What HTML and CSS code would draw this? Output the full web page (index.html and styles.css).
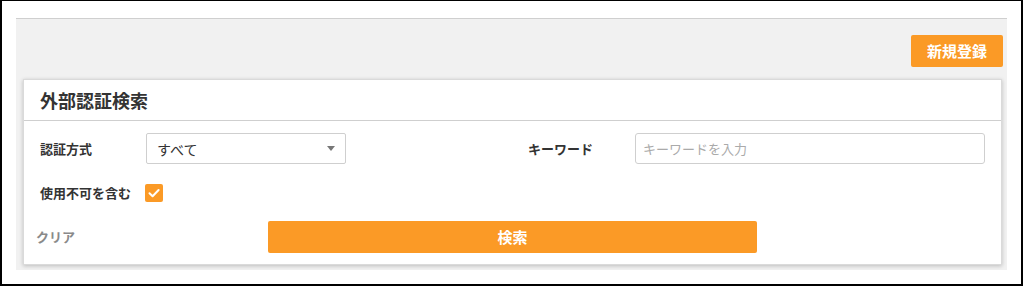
FILE: index.html
```html
<!DOCTYPE html>
<html lang="ja">
<head>
<meta charset="utf-8">
<link rel="stylesheet" href="styles.css">
</head>
<body>
<div class="frame">
  <div class="page">
    <div class="toolbar">
      <button class="btn btn-new" type="button">新規登録</button>
    </div>
    <section class="card">
      <header class="card-head">
        <h2 class="card-title">外部認証検索</h2>
      </header>
      <div class="card-body">
        <div class="row row-fields">
          <span class="label">認証方式</span>
          <div class="select">
            <span class="select-value">すべて</span>
            <span class="caret"></span>
          </div>
          <span></span>
          <span class="label">キーワード</span>
          <input class="text-input" type="text" placeholder="キーワードを入力">
        </div>
        <div class="row row-check">
          <span class="label label-check">使用不可を含む</span>
          <span class="checkbox">
            <svg viewBox="0 0 18 18" width="18" height="18"><path d="M4.5 9.2 L7.6 12.2 L13.6 6" fill="none" stroke="#fff" stroke-width="2" stroke-linecap="round" stroke-linejoin="round"/></svg>
          </span>
        </div>
        <div class="row row-actions">
          <span class="clear">クリア</span>
          <button class="btn btn-search" type="button">検索</button>
          <span></span>
        </div>
      </div>
    </section>
  </div>
</div>
</body>
</html>
```

FILE: styles.css
```css
* { box-sizing: border-box; }
html, body { margin: 0; padding: 0; background: #fff; }
body {
  font-family: "Noto Sans CJK JP", "Noto Sans", sans-serif;
  color: #333;
}
.frame {
  width: 1023px;
  height: 286px;
  border: 1px solid #000;
  border-left-width: 2px;
  border-right-width: 2px;
  border-bottom-width: 2px;
  padding: 17px 14px 14px 14px;
}
.page {
  height: 252px;
  background: #f1f1f1;
  border-top: 1px solid #cfcfcf;
  padding: 16px 4px 0 7px;
}
.toolbar {
  display: flex;
  justify-content: flex-end;
  height: 32px;
  margin-bottom: 12px;
}
.btn {
  border: none;
  background: #fb9a26;
  color: #fff;
  font-family: inherit;
  font-weight: bold;
  font-size: 15px;
  line-height: 32px;
  height: 32px;
  padding: 0;
  border-radius: 2px;
}
.btn-new { width: 92px; }
.card {
  margin-right: 1px;
  background: #fff;
  border: 1px solid #dadada;
  box-shadow: 0 1px 4px rgba(0,0,0,0.22);
  height: 186px;
}
.card-head {
  height: 41px;
  border-bottom: 1px solid #cfcfcf;
  padding: 0 16px;
  display: flex;
  align-items: center;
}
.card-title {
  margin: 0;
  font-size: 18px;
  font-weight: bold;
  line-height: 20px;
  color: #333;
}
.card-body {
  padding: 12px 16px 0 16px;
}
.row { display: grid; align-items: center; }
.row-fields {
  grid-template-columns: 106px 200px 1fr 107px 350px;
  height: 31px;
}
.label {
  font-size: 13px;
  font-weight: bold;
  line-height: 18px;
  color: #333;
}
.select {
  height: 31px;
  border: 1px solid #cfcfcf;
  border-radius: 2px;
  display: flex;
  align-items: center;
  justify-content: space-between;
  padding: 0 10px 0 10px;
}
.select-value { font-size: 14px; line-height: 18px; color: #333; }
.caret {
  width: 0;
  height: 0;
  border-left: 4px solid transparent;
  border-right: 4px solid transparent;
  border-top: 5px solid #777;
}
.text-input {
  height: 31px;
  width: 350px;
  border: 1px solid #cfcfcf;
  border-radius: 3px;
  padding: 0 7px;
  font-family: inherit;
  font-size: 13px;
  color: #333;
  outline: none;
}
.text-input::placeholder { color: #aaa; }
.row-check {
  grid-template-columns: 106px auto;
  justify-content: start;
  margin-top: 20px;
  height: 18px;
}
.checkbox {
  width: 18px;
  height: 18px;
  margin-left: -1px;
  background: #fb9a26;
  border-radius: 2px;
  display: block;
}
.checkbox svg { display: block; }
.row-actions {
  grid-template-columns: 1fr 489px 1fr;
  margin-top: 19px;
  height: 32px;
}
.clear {
  font-size: 13px;
  font-weight: bold;
  color: #8a8a8a;
  margin-left: -4px;
  line-height: 18px;
}
.btn-search { width: 489px; }
```
